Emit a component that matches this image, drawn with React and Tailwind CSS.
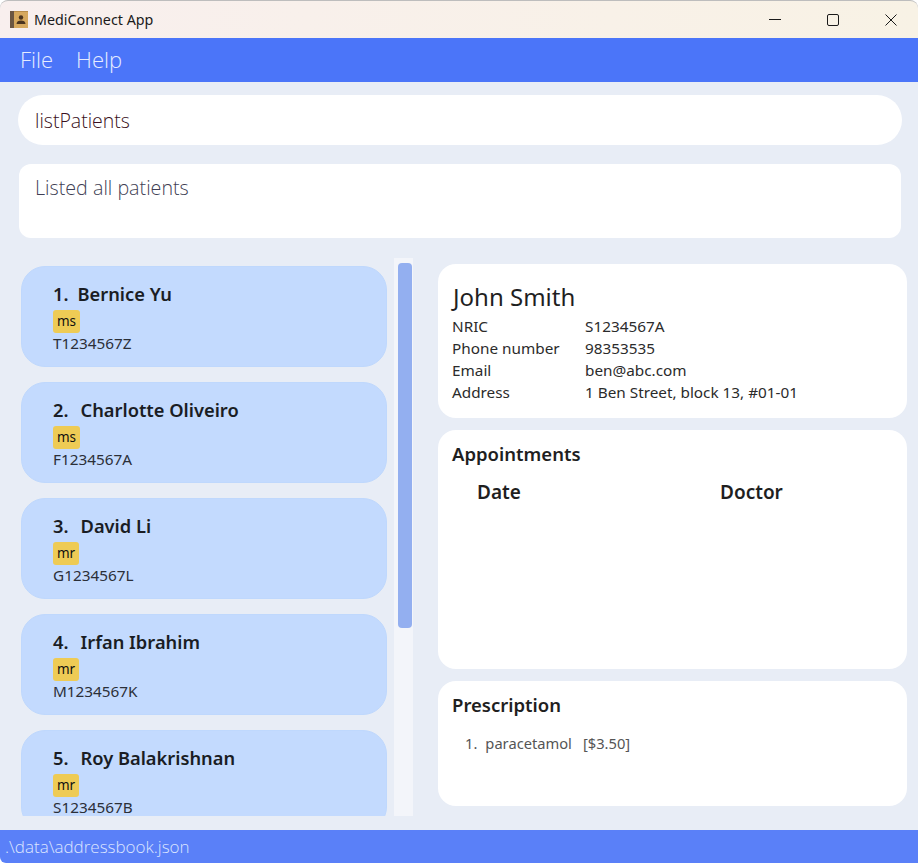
const patients = [
  { name: "Bernice Yu", tag: "ms", nric: "T1234567Z" },
  { name: "Charlotte Oliveiro", tag: "ms", nric: "F1234567A" },
  { name: "David Li", tag: "mr", nric: "G1234567L" },
  { name: "Irfan Ibrahim", tag: "mr", nric: "M1234567K" },
  { name: "Roy Balakrishnan", tag: "mr", nric: "S1234567B" },
];

const details = [
  ["NRIC", "S1234567A"],
  ["Phone number", "98353535"],
  ["Email", "ben@abc.com"],
  ["Address", "1 Ben Street, block 13, #01-01"],
];

const AppIcon = () => (
  <svg width="18" height="17" viewBox="0 0 18 17" className="shrink-0">
    <rect x="0" y="0" width="4" height="17" fill="#6b5642" />
    <rect x="4" y="0" width="14" height="17" fill="#d6a85e" />
    <rect x="4" y="0" width="14" height="1" fill="#b88c48" />
    <circle cx="11" cy="6.500" r="2.200" fill="#4a3420" />
    <path d="M6.500 13c0-2.500 2-3.500 4.500-3.500s4.500 1 4.500 3.500z" fill="#4a3420" />
  </svg>
);

const WindowControls = () => (
  <div className="ml-auto pr-[21px] flex items-center gap-[46px]">
    <svg width="12" height="12" viewBox="0 0 12 12" stroke="#1a1a1a" fill="none">
      <path d="M0 5.500h12" />
    </svg>
    <svg width="12" height="12" viewBox="0 0 12 12" stroke="#1a1a1a" fill="none">
      <rect x="0.500" y="0.500" width="11" height="11" rx="1.500" />
    </svg>
    <svg width="12" height="12" viewBox="0 0 12 12" stroke="#1a1a1a" fill="none">
      <path d="M0.500 0.500l11 11M11.500 0.500l-11 11" />
    </svg>
  </div>
);

const PatientCard = ({ index, patient }) => (
  <div className="shrink-0 h-[101px] rounded-[24px] bg-[#c3dafe] border border-[#bfd8fd] pl-[31px] pt-[13px]">
    <div className="flex text-[18.300px] leading-[28px] font-semibold text-[#1a1d24]">
      <span className={index === 1 ? "mr-[9px]" : "mr-[12px]"}>{index}.</span>
      <span>{patient.name}</span>
    </div>
    <div className="flex mt-[2px]">
      <span className="h-[23px] px-[4px] rounded-[3px] bg-[#eecb55] text-[13.500px] leading-[23px] text-[#111111]">
        {patient.tag}
      </span>
    </div>
    <div className="text-[15.300px] leading-[19px] mt-[1px] text-[#2b2f38]">{patient.nric}</div>
  </div>
);

export default function App() {
  return (
    <div className="w-[918px] h-[863px] flex flex-col overflow-hidden bg-white font-['Noto_Sans','Open_Sans',sans-serif]">
      <div className="h-[38px] shrink-0 flex items-center rounded-t-lg border-t border-[#bdbdbd] bg-gradient-to-r from-[#f8efee] to-[#f8f2e5]">
        <div className="pl-[10px] flex items-center gap-[6px] text-[14.300px] text-[#1a1a1a]">
          <AppIcon />
          <span>MediConnect App</span>
        </div>
        <WindowControls />
      </div>

      <div className="h-[44px] shrink-0 bg-[#4b75f9] flex items-center pl-[20px] pb-[2px] gap-[23px] text-[22px] font-light text-[#e6ecff] font-['Open_Sans',sans-serif]">
        <span>File</span>
        <span>Help</span>
      </div>

      <div className="flex-1 min-h-0 flex flex-col bg-[#e8edf6]">
        <div className="h-[50px] shrink-0 mt-[13px] ml-[18px] mr-[16px] rounded-[25px] bg-white flex items-center pl-[17px] pt-[2px] text-[19.500px] font-light text-[#3a1020] font-['Open_Sans',sans-serif]">
          listPatients
        </div>
        <div className="h-[74px] shrink-0 mt-[19px] ml-[19px] mr-[17px] rounded-[12px] bg-white pl-[16px] pt-[9px] text-[19.700px] leading-[30px] font-light text-[#3f3f55] font-['Open_Sans',sans-serif]">
          Listed all patients
        </div>

        <div className="flex-1 min-h-0 flex mt-[20px] mb-[14px]">
          <div className="w-[366px] ml-[21px] pt-[8px] flex flex-col gap-[15px] overflow-hidden">
            {patients.map((p, i) => (
              <PatientCard key={p.name} index={i + 1} patient={p} />
            ))}
          </div>

          <div className="w-[19px] ml-[7px] bg-[#f3f5fa] pt-[5px] pl-[4px]">
            <div className="w-[14px] h-[365px] rounded-[4px] bg-[#93aff0]" />
          </div>

          <div className="w-[469px] ml-[25px] pt-[6px] flex flex-col gap-[12px] text-[#1f1f1f]">
            <div className="h-[154px] shrink-0 rounded-[18px] bg-white pl-[14px] pt-[17px]">
              <div className="text-[24px] leading-[32px] pl-[1px] text-[#1f1f1f]">John Smith</div>
              <div className="mt-[2px] text-[15.300px] leading-[22px] text-[#2b2b2b]">
                {details.map(([label, value]) => (
                  <div key={label} className="flex">
                    <span className="w-[133px]">{label}</span>
                    <span>{value}</span>
                  </div>
                ))}
              </div>
            </div>

            <div className="h-[239px] shrink-0 rounded-[18px] bg-white pl-[14px] pt-[10px]">
              <div className="text-[18.500px] leading-[28px] font-semibold">Appointments</div>
              <div className="flex mt-[10px] text-[19px] leading-[28px] font-semibold">
                <span className="ml-[25px] w-[243px]">Date</span>
                <span>Doctor</span>
              </div>
            </div>

            <div className="h-[125px] shrink-0 rounded-[18px] bg-white pl-[14px] pt-[10px]">
              <div className="text-[18.500px] leading-[28px] font-semibold">Prescription</div>
              <div className="flex mt-[14px] ml-[13px] text-[14.700px] leading-[20px] text-[#555555]">
                <span className="mr-[8px]">1.</span>
                <span>paracetamol</span>
                <span className="ml-[11px]">[$3.50]</span>
              </div>
            </div>
          </div>
        </div>
      </div>

      <div className="h-[33px] shrink-0 bg-[#5a80f8] rounded-bl-md flex items-center pl-[5px] text-[17px] font-light text-[#dce5ff] font-['Open_Sans',sans-serif]">
        .\data\addressbook.json
      </div>
    </div>
  );
}
